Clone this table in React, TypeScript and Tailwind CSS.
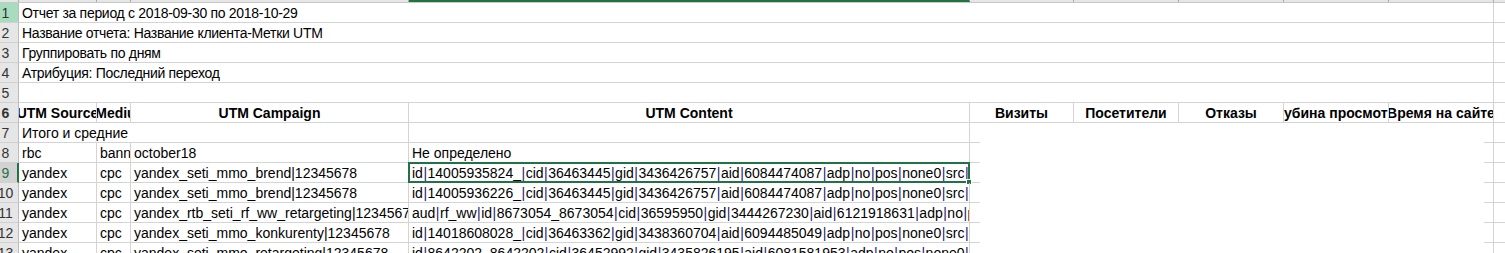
const GRID = "border-[#d4d4d4]";
const FONT = "font-['Liberation_Sans',Arial,sans-serif]";

const COLS = [
  { key: "A", w: "w-[78px]" },
  { key: "B", w: "w-[34px]" },
  { key: "C", w: "w-[278px]" },
  { key: "D", w: "w-[561px]" },
  { key: "E", w: "w-[104px]" },
  { key: "F", w: "w-[105px]" },
  { key: "G", w: "w-[105px]" },
  { key: "H", w: "w-[105px]" },
  { key: "I", w: "w-[105px]" },
];

const INFO = [
  "Отчет за период с 2018-09-30 по 2018-10-29",
  "Название отчета: Название клиента-Метки UTM",
  "Группировать по дням",
  "Атрибуция: Последний переход",
  "",
];

const HEADERS = [
  "UTM Source",
  "UTM Medium",
  "UTM Campaign",
  "UTM Content",
  "Визиты",
  "Посетители",
  "Отказы",
  "Глубина просмотра",
  "Время на сайте",
];

const DATA = [
  ["rbc", "banner", "october18", "Не определено"],
  [
    "yandex",
    "cpc",
    "yandex_seti_mmo_brend|12345678",
    "id|14005935824_|cid|36463445|gid|3436426757|aid|6084474087|adp|no|pos|none0|src|context|dvc|desktop",
  ],
  [
    "yandex",
    "cpc",
    "yandex_seti_mmo_brend|12345678",
    "id|14005936226_|cid|36463445|gid|3436426757|aid|6084474087|adp|no|pos|none0|src|context|dvc|desktop",
  ],
  [
    "yandex",
    "cpc",
    "yandex_rtb_seti_rf_ww_retargeting|12345678",
    "aud|rf_ww|id|8673054_8673054|cid|36595950|gid|3444267230|aid|6121918631|adp|no|pos|none0|src|context",
  ],
  [
    "yandex",
    "cpc",
    "yandex_seti_mmo_konkurenty|12345678",
    "id|14018608028_|cid|36463362|gid|3438360704|aid|6094485049|adp|no|pos|none0|src|context|dvc|desktop",
  ],
  [
    "yandex",
    "cpc",
    "yandex_seti_mmo_retargeting|12345678",
    "id|8642202_8642202|cid|36452992|gid|3435826195|aid|6081581953|adp|no|pos|none0|src|context",
  ],
];

function RowHead({ n, mode }: { n: number; mode?: "band" | "active" }) {
  const bg = mode === "band" ? "bg-[#a7dcbf]" : mode === "active" ? "bg-[#d2d2d2]" : "bg-[#e6e6e6]";
  const edge = mode === "active" ? "border-r-2 border-r-[#217346]" : "border-r border-r-[#bcbcbc]";
  const color = mode === "active" ? "text-[#217346]" : "text-[#333]";
  return (
    <div className={`w-[19px] shrink-0 h-full overflow-hidden flex items-end pb-px border-b border-b-[#d0d0d0] ${bg} ${edge}`}>
      <div className={`w-[11px] flex justify-center leading-[16px] text-[14px] ${color}`}>{n}</div>
    </div>
  );
}

function Content({ text }: { text: string }) {
  const parts = text.split("|");
  return (
    <>
      {parts.map((p, i) => (
        <span key={i}>
          {i > 0 && <span className="mx-[0.5px] text-[#2a1870]">|</span>}
          {p}
        </span>
      ))}
    </>
  );
}

function Blank() {
  // white-filled E:I area, gridlines hidden except small stubs at both ends
  return (
    <div className={`w-[524px] shrink-0 h-full flex items-end justify-between border-r ${GRID}`}>
      <div className="w-[10px] h-px bg-[#d4d4d4]" />
      <div className="w-[9px] h-px bg-[#d4d4d4]" />
    </div>
  );
}

function Tail() {
  return <div className={`flex-1 h-full border-b ${GRID}`} />;
}

export default function App() {
  return (
    <div className={`w-[1505px] h-[253px] overflow-hidden bg-white text-black ${FONT}`}>
      {/* column header strip (mostly scrolled out of view) */}
      <div className="flex h-[3px] bg-[#e6e6e6] border-b border-[#c8c8c8]">
        <div className="w-[19px] shrink-0 border-r border-[#ababab]" />
        {COLS.map((c) => (
          <div key={c.key} className={`${c.w} shrink-0 border-r border-[#ababab] ${c.key === "D" ? "border-b-2 border-b-[#217346]" : ""}`} />
        ))}
        <div className="flex-1" />
      </div>

      {INFO.map((t, i) => (
        <div key={i} className="flex h-[20px] text-[14px] leading-[16px]">
          <RowHead n={i + 1} mode={i === 0 ? "band" : undefined} />
          <div className={`w-[1475px] shrink-0 h-full flex items-end pb-px pl-[3px] border-r border-b ${GRID} whitespace-nowrap tracking-[-0.3px]`}>
            {t}
          </div>
          <Tail />
        </div>
      ))}

      <div className="flex h-[20px] text-[14px] leading-[16px] font-bold">
        <RowHead n={6} />
        {HEADERS.map((h, i) => (
          <div
            key={h}
            className={`${COLS[i].w} shrink-0 h-full overflow-hidden flex items-end pb-px border-r border-b ${GRID} ${i === 1 ? "justify-start" : "justify-center"}`}
          >
            <span className={`whitespace-nowrap ${i === 1 ? "-ml-[36px]" : ""}`}>{h}</span>
          </div>
        ))}
        <Tail />
      </div>

      <div className="flex h-[20px] text-[14px] leading-[16px]">
        <RowHead n={7} />
        <div className={`w-[390px] shrink-0 h-full flex items-end pb-px pl-[3px] border-r border-b ${GRID}`}>
          Итого и средние
        </div>
        <div className={`w-[561px] shrink-0 h-full border-r border-b ${GRID}`} />
        <Blank />
        <Tail />
      </div>

      {DATA.map((r, i) => {
        const n = i + 8;
        return (
          <div key={n} className="flex h-[20px] text-[14px] leading-[16px]">
            <RowHead n={n} mode={n === 9 ? "active" : undefined} />
            {r.map((v, j) => (
              <div key={j} className={`${COLS[j].w} shrink-0 h-full relative border-r border-b ${GRID}`}>
                <div className="w-full h-full flex items-end pb-px pl-[3px] whitespace-nowrap overflow-hidden">
                  {j === 3 ? <Content text={v} /> : v}
                </div>
                {n === 9 && j === 3 && (
                  <div className="absolute -left-px -top-px -right-px -bottom-px border-2 border-[#217346] pointer-events-none">
                    <div className="absolute -right-[4px] -bottom-[4px] w-[6px] h-[6px] bg-[#217346] border border-white" />
                  </div>
                )}
              </div>
            ))}
            <Blank />
            <Tail />
          </div>
        );
      })}
    </div>
  );
}
